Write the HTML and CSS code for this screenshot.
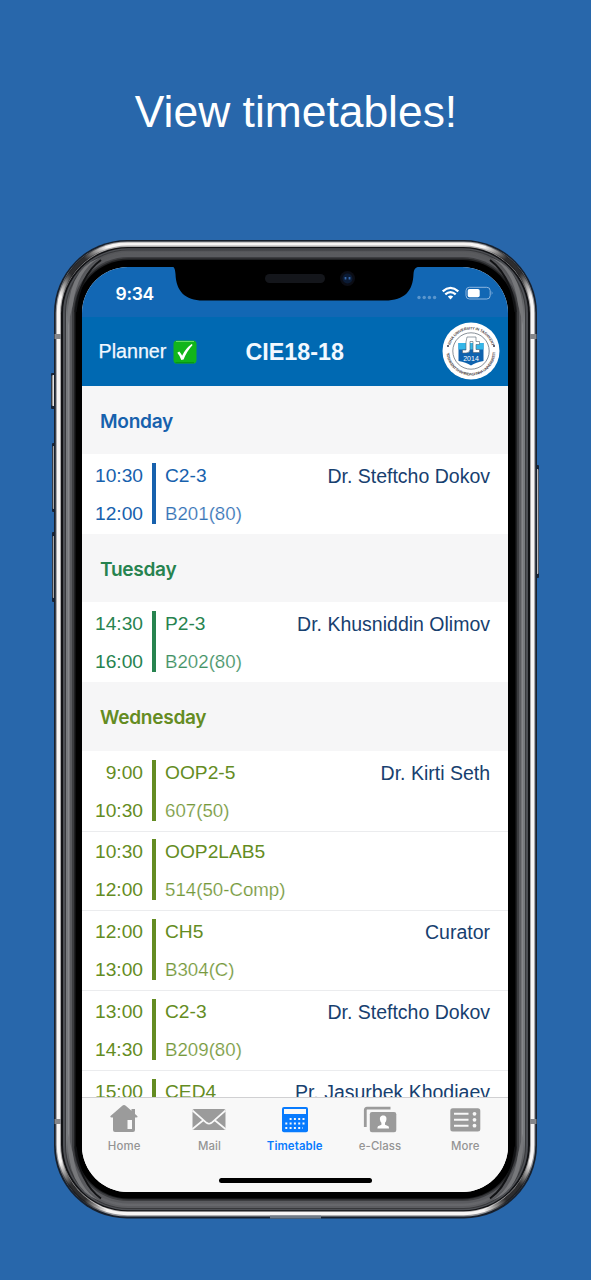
FILE: index.html
```html
<!DOCTYPE html>
<html lang="en">
<head>
<meta charset="utf-8">
<title>View timetables!</title>
<link rel="stylesheet" href="styles.css">
</head>
<body>
<main class="promo">
  <h1 class="headline">View timetables!</h1>
  <div class="phone">
    <svg class="frame" width="495" height="982" viewBox="48 239 495 982" aria-hidden="true">
      <defs>
        <linearGradient id="btn" x1="0" x2="1" y1="0" y2="0"><stop offset="0" stop-color="#555"/><stop offset=".5" stop-color="#e0e0e2"/><stop offset="1" stop-color="#8b8c90"/></linearGradient>
        <linearGradient id="metal" x1="0" x2="0" y1="252" y2="1205" gradientUnits="userSpaceOnUse"><stop offset="0" stop-color="#55565a"/><stop offset=".03" stop-color="#4a4b4e"/><stop offset=".07" stop-color="#77797d"/><stop offset=".93" stop-color="#77797d"/><stop offset=".97" stop-color="#4a4b4e"/><stop offset="1" stop-color="#5c5d61"/></linearGradient>
        <linearGradient id="shine" x1="0" x2="0" y1="252" y2="1205" gradientUnits="userSpaceOnUse"><stop offset="0" stop-color="#5a5b5e"/><stop offset=".03" stop-color="#55565a"/><stop offset=".07" stop-color="#8c8d90"/><stop offset=".93" stop-color="#8c8d90"/><stop offset=".97" stop-color="#55565a"/><stop offset="1" stop-color="#67686c"/></linearGradient>
        <linearGradient id="fade" x1="60" y1="296" x2="106" y2="246" gradientUnits="userSpaceOnUse"><stop offset="0" stop-color="#0a0a0c" stop-opacity="0"/><stop offset=".35" stop-color="#0a0a0c" stop-opacity=".85"/><stop offset=".65" stop-color="#0a0a0c" stop-opacity=".85"/><stop offset="1" stop-color="#0a0a0c" stop-opacity="0"/></linearGradient>
        <g id="corner">
          <path d="M60.500 297Q69 262 106 246.500" fill="none" stroke="url(#fade)" stroke-width="5"/>
          <path d="M99 258Q77 271 73 304L68 325Q66 270 99 258Z" fill="#77787b"/>
          <path d="M101 260Q80 275 75.500 312" fill="none" stroke="#111214" stroke-width="2"/>
        </g>
      </defs>
      <g fill="#172438">
        <rect x="51" y="373" width="5" height="36" rx="1"/><rect x="52" y="443" width="4" height="69" rx="1"/><rect x="52" y="532" width="4" height="70" rx="1"/><rect x="535" y="465" width="4" height="113" rx="1"/>
      </g>
      <g fill="url(#btn)">
        <rect x="51.5" y="375" width="4" height="31" rx="1.5"/><rect x="52.5" y="446" width="3.5" height="63" rx="1"/><rect x="52.5" y="536" width="3.5" height="62" rx="1"/><rect x="535" y="469" width="3.5" height="105" rx="1"/>
      </g>
      <rect x="54" y="240" width="483" height="978.5" rx="73" fill="#17202d"/>
      <rect x="55.7" y="241.5" width="479.6" height="975" rx="71.5" fill="#96979b"/>
      <rect x="56.8" y="242.4" width="477.4" height="972.8" rx="70.5" fill="#f7f5f4"/>
      <rect x="60" y="245.6" width="471" height="966.4" rx="67.5" fill="#aaa9aa"/>
      <rect x="61" y="247" width="469" height="964.3" rx="66.5" fill="#111215"/>
      <rect x="63" y="248.2" width="465" height="962" rx="65" fill="#4e5055"/>
      <rect x="65" y="249.5" width="461" height="959.5" rx="63" fill="#38393c"/>
      <rect x="66" y="250.5" width="459" height="957.5" rx="62" fill="url(#metal)"/>
      <rect x="68.3" y="252" width="454.4" height="954" rx="60" fill="url(#shine)"/>
      <rect x="69.5" y="254.5" width="452" height="949" rx="59" fill="#5a5b5f"/>
      <rect x="72" y="257" width="447" height="944" rx="56.5" fill="#3c3d40"/>
      <rect x="74" y="258.5" width="443" height="941" rx="54.5" fill="#202123"/>
      <rect x="75.5" y="260" width="440" height="938.5" rx="53" fill="#000"/>
      <use href="#corner"/>
      <use href="#corner" transform="translate(591 0) scale(-1 1)"/>
      <use href="#corner" transform="translate(0 1458.5) scale(1 -1)"/>
      <use href="#corner" transform="translate(591 1458.5) scale(-1 -1)"/>
      <g fill="#85868a">
        <rect x="54.5" y="334" width="6.5" height="5"/><rect x="530" y="334" width="6.5" height="5"/>
        <rect x="54.5" y="1119" width="6.5" height="5"/><rect x="530" y="1119" width="6.5" height="5"/>
      </g>
      <rect x="270" y="1215.5" width="51" height="3" fill="#707a86"/>
    </svg>
    <div class="screen">
      <div class="status">
        <span class="clock">9:34</span>
        <svg class="status-icons" width="78" height="16" viewBox="0 0 78 16" aria-hidden="true">
          <g fill="#5a96cd"><circle cx="3" cy="11.5" r="1.7"/><circle cx="8.2" cy="11.5" r="1.7"/><circle cx="13.4" cy="11.5" r="1.7"/><circle cx="18.6" cy="11.5" r="1.7"/></g>
          <g fill="none" stroke="#fff" stroke-width="2.3"><path d="M26.7 5.3Q34.5-1.5 42.3 5.3"/><path d="M29.3 8.4Q34.5 3.9 39.7 8.4"/></g>
          <path d="M31.8 10.5Q34.5 8.5 37.2 10.5L34.5 13.4Z" fill="#fff"/>
          <rect x="50" y="1.3" width="24.2" height="11.7" rx="3.4" fill="none" stroke="#8db6df"/>
          <rect x="51.7" y="3" width="12" height="8.3" rx="1.8" fill="#fff"/>
          <path d="M75.7 5.1Q77.5 7.1 75.7 9.1Z" fill="#8db6df"/>
        </svg>
      </div>
      <header class="nav">
        <div class="planner">Planner
          <svg width="24" height="24" viewBox="0 0 24 24" aria-hidden="true"><rect x=".5" y=".5" width="23" height="23" rx="3.6" fill="#12b51b"/><path d="M3 1.5H21" stroke="#66db63" stroke-width="1.2"/><path d="M2.5 22.7H21" stroke="#079310"/><path d="M4.3 12.8L6.3 11.5Q8 13.5 9.1 15.7Q12.3 8.8 18.6 4L19.6 5.1Q13.6 11.6 10.6 19.6L8.3 20Q7 16 4.3 12.8Z" fill="#fff"/></svg>
        </div>
        <div class="title">CIE18-18</div>
        <svg class="logo" width="58" height="58" viewBox="0 0 58 58" role="img" aria-label="Inha University in Tashkent">
          <defs><path id="arcTop" d="M7.5 29A21.5 21.5 0 0 1 50.5 29"/><path id="arcBottom" d="M4.5 29A24.5 24.5 0 0 0 53.5 29"/></defs>
          <circle cx="29" cy="29" r="28.5" fill="#fff"/>
          <circle cx="29" cy="29" r="18.2" fill="none" stroke="#69737d" stroke-width=".8"/>
          <text class="seal"><textPath href="#arcTop" startOffset="6" textLength="56">INHA UNIVERSITY IN TASHKENT</textPath></text>
          <text class="seal"><textPath href="#arcBottom" startOffset="2" textLength="73">TOSHKENT SHAHRIDAGI INHA UNIVERSITETI</textPath></text>
          <circle cx="6" cy="24" r="1" fill="#334"/><circle cx="52" cy="24" r="1" fill="#334"/>
          <path d="M16.5 21H41.5V39Q34 40 29 43.5Q24 40 16.5 39Z" fill="#0e62ae"/>
          <path d="M16.5 21H41.5V27.5H16.5Z" fill="#35b6e8"/>
          <path d="M25 15H34V19.5H37.5V22.5H34V27.5H37.5V30.5H31V19.5H28V27.5Q28 31 24 31H20.5V28H24V20Z" fill="#fff" stroke="#52616f" stroke-width=".6"/>
          <text x="29" y="38.5" class="year">2014</text>
        </svg>
      </header>
      <div class="list">
        <section class="day mon">
          <h2>Monday</h2>
          <div class="row"><div class="times"><span>10:30</span><span>12:00</span></div><i class="bar"></i><div class="info"><span>C2-3</span><span class="room">B201(80)</span></div><div class="who">Dr. Steftcho Dokov</div></div>
        </section>
        <section class="day tue">
          <h2>Tuesday</h2>
          <div class="row"><div class="times"><span>14:30</span><span>16:00</span></div><i class="bar"></i><div class="info"><span>P2-3</span><span class="room">B202(80)</span></div><div class="who">Dr. Khusniddin Olimov</div></div>
        </section>
        <section class="day wed">
          <h2>Wednesday</h2>
          <div class="row"><div class="times"><span>9:00</span><span>10:30</span></div><i class="bar"></i><div class="info"><span>OOP2-5</span><span class="room">607(50)</span></div><div class="who">Dr. Kirti Seth</div></div>
          <div class="row"><div class="times"><span>10:30</span><span>12:00</span></div><i class="bar"></i><div class="info"><span>OOP2LAB5</span><span class="room">514(50-Comp)</span></div><div class="who"></div></div>
          <div class="row"><div class="times"><span>12:00</span><span>13:00</span></div><i class="bar"></i><div class="info"><span>CH5</span><span class="room">B304(C)</span></div><div class="who">Curator</div></div>
          <div class="row"><div class="times"><span>13:00</span><span>14:30</span></div><i class="bar"></i><div class="info"><span>C2-3</span><span class="room">B209(80)</span></div><div class="who">Dr. Steftcho Dokov</div></div>
          <div class="row"><div class="times"><span>15:00</span></div><i class="bar"></i><div class="info"><span>CED4</span></div><div class="who">Pr. Jasurbek Khodiaev</div></div>
        </section>
      </div>
      <nav class="tabs">
        <div class="tab">
          <svg width="34" height="30" viewBox="0 0 34 30" aria-hidden="true"><path fill="#9b9b9b" fill-rule="evenodd" d="M17 1Q18 1 19 2L24.5 6.7V5H28V10L30.5 12.2Q31 13.4 29 13.4H28V26Q28 28 26 28H8Q6 28 6 26V13.4H4.5Q2.5 13.4 3.5 12L15 2Q16 1 17 1ZM20.5 16V25H25V16Z"/></svg>
          <span>Home</span>
        </div>
        <div class="tab">
          <svg width="34" height="30" viewBox="0 0 34 30" aria-hidden="true"><rect x=".5" y="5" width="33" height="21" rx="1.5" fill="#9b9b9b"/><path d="M.5 6.5L14.5 18.8Q17 20.7 19.5 18.8L33.5 6.5M.5 25L11.5 16M33.5 25L22.5 16" fill="none" stroke="#f8f8f8" stroke-width="1.7"/></svg>
          <span>Mail</span>
        </div>
        <div class="tab active">
          <svg width="34" height="30" viewBox="0 0 34 30" aria-hidden="true"><rect x="4" y="3" width="26" height="25.3" rx="2" fill="#087bfe"/><rect x="6" y="5" width="22" height="5" fill="#f8f8f8"/><path d="M11.6 15H28M7.3 19.5H28M7.3 24H25" stroke="#f8f8f8" stroke-width="2" stroke-dasharray="2 2.3"/></svg>
          <span>Timetable</span>
        </div>
        <div class="tab">
          <svg width="34" height="30" viewBox="0 0 34 30" aria-hidden="true"><path d="M2.3 23V6Q2.3 4.2 4 4.2H27.5" fill="none" stroke="#9b9b9b" stroke-width="2.8"/><rect x="6.8" y="8" width="26.5" height="20.2" rx="2.2" fill="#9b9b9b"/><path d="M20.2 11.5C23.3 11.5 23.8 14.1 23.3 16.2Q23 18 22 18.8V20.7L25.5 22.3Q26 23 26 24.5H14.4Q14.4 23 15 22.3L18.4 20.7V18.8Q17.4 18 17.1 16.2C16.6 14.1 17.1 11.5 20.2 11.5Z" fill="#fff"/></svg>
          <span>e-Class</span>
        </div>
        <div class="tab">
          <svg width="34" height="30" viewBox="0 0 34 30" aria-hidden="true"><rect x="2.3" y="4.3" width="30" height="23.2" rx="2.5" fill="#9b9b9b"/><path d="M6 9.8H20.5M6 15.8H20.5M6 21.7H20.5" stroke="#f8f8f8" stroke-width="1.9"/><g fill="#f8f8f8"><circle cx="26.5" cy="9.8" r="1.9"/><circle cx="26.5" cy="15.8" r="1.9"/><circle cx="26.5" cy="21.7" r="1.9"/></g></svg>
          <span>More</span>
        </div>
      </nav>
      <div class="home-indicator"></div>
    </div>
    <svg class="notch" width="252" height="36" viewBox="0 0 252 36" aria-hidden="true">
      <path d="M0 0H252V1.5C245 1.5 243 3 242.5 9C242 26 233.500 35.500 214 35.500H32C14 35.500 5 26 4.500 9C4 3 3 1.5 0 1.5Z" fill="#000"/>
      <rect x="94" y="9" width="60" height="9" rx="4.5" fill="#14161b"/>
      <circle cx="176.5" cy="13.5" r="7.5" fill="#0b0d15"/><circle cx="176.5" cy="13.5" r="5" fill="#0b1b35"/>
      <path d="M174.5 12V14.5M178.5 12V14.5" stroke="#3667a9" stroke-width="1.8"/>
    </svg>
  </div>
</main>
</body>
</html>
```
FILE: styles.css
```css
* { box-sizing: border-box; }
body { margin: 0; background: #2867ab; font-family: "Liberation Sans", Arial, sans-serif; }
.promo { width: 591px; height: 1280px; overflow: hidden; }
.headline { margin: 0; height: 239px; padding: 86px 0 0 1px; text-align: center; color: #fff; font-size: 44.4px; line-height: 52px; font-weight: 400; }
.phone { position: relative; width: 495px; height: 982px; margin: 0 auto 0 48px; padding: 28px 35px 28px 33.5px; }
.frame { position: absolute; left: 0; top: 0; }
.notch { position: absolute; left: 123px; top: 26px; }
.screen { position: relative; display: flex; flex-direction: column; width: 426.5px; height: 925px; overflow: hidden; border-radius: 46px; background: #fff; }
.status { display: flex; justify-content: space-between; align-items: center; flex: none; height: 50px; padding: 2px 14.5px 0 34px; background: #1267b4; color: #fff; }
.clock { font: 600 17.5px/22px Inter, sans-serif; padding-top: 2px; letter-spacing: -.3px; }
.status-icons { flex: none; margin-top: 2px; }
.nav { flex: none; display: grid; grid-template-columns: 147px auto 1fr; align-items: center; height: 68.5px; padding: 0 8px 0 17px; background: #0069b2; color: #f1f8ff; }
.planner { display: flex; align-items: center; gap: 6.5px; font-size: 19.7px; -webkit-text-stroke: .25px #f1f8ff; }
.planner svg { margin-top: 1px; }
.title { padding-top: 2px; font-size: 23.3px; font-weight: 700; }
.logo { justify-self: end; }
.seal { font-size: 3.8px; font-weight: 700; fill: #4c4346; }
.year { font-size: 7px; fill: #fff; text-anchor: middle; }
.list { flex: 1; min-height: 0; overflow: hidden; }
.day h2 { margin: 0; height: 68.6px; padding: 1px 0 0 18.5px; background: #f6f6f7; font: 600 19.1px/69px Inter, sans-serif; letter-spacing: -.3px; }
.mon { color: #1761ad; }
.tue { color: #27834f; }
.wed { color: #648c22; }
.row { display: grid; grid-template-columns: 48px 4px auto 1fr; column-gap: 9px; height: 79.8px; padding: 2.7px 18px 0 13.5px; font-size: 19.5px; line-height: 38px; background: #fff; }
.row + .row { border-top: 1.5px solid #ebecee; padding-top: 1.7px; }
.times, .info { display: flex; flex-direction: column; }
.times { align-items: flex-end; font-size: 19.2px; white-space: nowrap; }
.bar { width: 3.5px; height: 61px; margin-top: 6px; background: currentColor; }
.info { white-space: nowrap; font-size: 19.2px; }
.room { font-size: 18.7px; opacity: .88; -webkit-text-stroke: .2px #fff; }
.who { text-align: right; color: #17406f; white-space: nowrap; }
.tabs { flex: none; display: grid; grid-template-columns: repeat(5, 1fr); height: 95px; border-top: 1px solid #d0d0d2; background: #f8f8f8; color: #949494; }
.tab { display: flex; flex-direction: column; align-items: center; padding-top: 6px; gap: 5px; font: 500 11.4px/14px Inter, sans-serif; letter-spacing: .1px; }
.tab.active { color: #087bfe; font-weight: 600; }
.home-indicator { position: absolute; left: 137px; bottom: 9px; width: 153px; height: 5.5px; border-radius: 3px; background: #000; }
```
